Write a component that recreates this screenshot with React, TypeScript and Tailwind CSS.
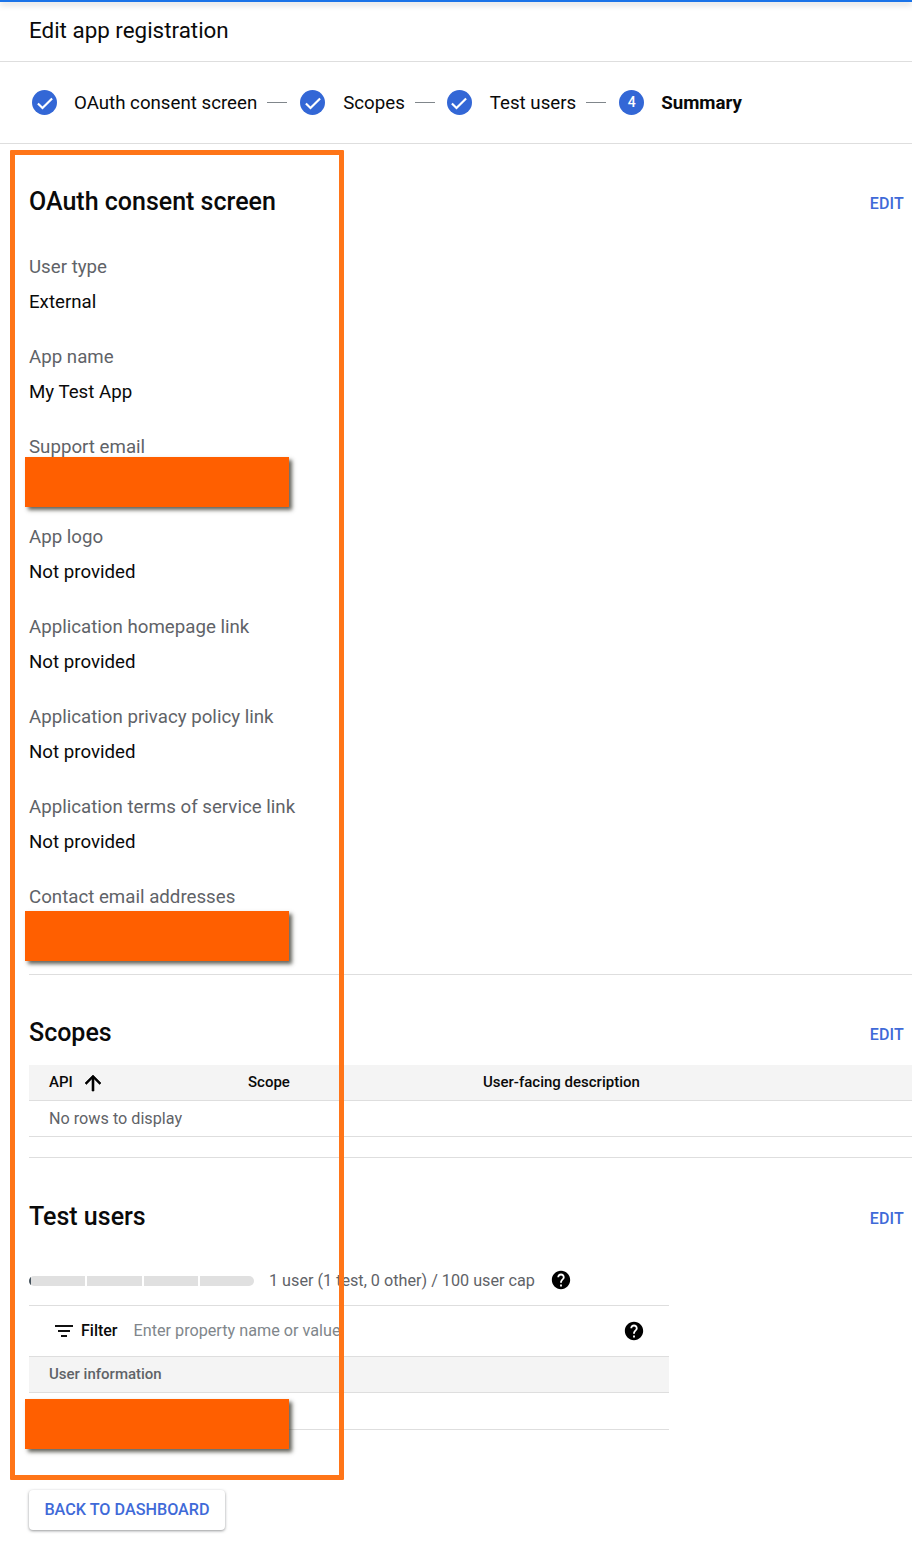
const fields = [
  { label: "User type", value: "External" },
  { label: "App name", value: "My Test App" },
  { label: "Support email", value: "" },
  { label: "App logo", value: "Not provided" },
  { label: "Application homepage link", value: "Not provided" },
  { label: "Application privacy policy link", value: "Not provided" },
  { label: "Application terms of service link", value: "Not provided" },
  { label: "Contact email addresses", value: "" },
];

function StepCircle({ n }: { n?: number }) {
  return (
    <span className="flex h-[25px] w-[25px] shrink-0 items-center justify-center rounded-full bg-[#3367d6] text-[14px] font-medium text-white">
      {n ? (
        n
      ) : (
        <svg width="20" height="20" viewBox="0 0 24 24" fill="none" stroke="white" strokeWidth="2.6">
          <path d="M3.5 12.5l5.5 5.5L20.5 6.5" />
        </svg>
      )}
    </span>
  );
}

function Dash() {
  return <span className="mx-[10px] h-px w-5 bg-[#80868b]" />;
}

function HelpIcon({ className }: { className: string }) {
  return (
    <svg width="22" height="22" viewBox="0 0 24 24" fill="#000" className={className}>
      <path d="M12 2C6.48 2 2 6.48 2 12s4.48 10 10 10 10-4.48 10-10S17.52 2 12 2zm1 17h-2v-2h2v2zm2.07-7.75l-.9.92C13.45 12.9 13 13.5 13 15h-2v-.5c0-1.1.45-2.1 1.17-2.83l1.24-1.26c.37-.36.59-.86.59-1.41 0-1.1-.9-2-2-2s-2 .9-2 2H8c0-2.21 1.79-4 4-4s4 1.79 4 4c0 .88-.36 1.68-.93 2.25z" />
    </svg>
  );
}

function Redacted({ top }: { top: string }) {
  return <div className={`absolute left-[25px] h-[50px] w-[264px] bg-[#ff5f00] shadow-[3px_3px_4px_rgba(60,60,50,0.8)] ${top}`} />;
}

function SectionHead({ title, className }: { title: string; className: string }) {
  return (
    <div className={`flex items-center justify-between pr-2 ${className}`}>
      <h2 className="pt-[2px] text-[25px] leading-[30px] font-medium text-[#0a0a0a]">{title}</h2>
      <a className="pt-[5px] text-[16px] font-medium tracking-[0.2px] text-[#3f6ad8]">EDIT</a>
    </div>
  );
}

export default function App() {
  return (
    <div className="relative h-[1548px] w-[912px] overflow-hidden bg-white font-['Roboto',sans-serif] text-[#0a0a0a]">
      <div className="h-[2px] bg-[#1a73e8] shadow-[0_2px_6px_rgba(60,64,67,0.4)]" />
      <header className="flex h-[60px] items-center border-b border-[#dedede] pb-[2px] pl-[29px] text-[22.4px]">
        Edit app registration
      </header>

      <div className="flex h-[82px] items-center border-b border-[#dedede] pl-[32px] text-[18.7px]">
        <StepCircle />
        <span className="ml-[17px] pt-[2px]">OAuth consent screen</span>
        <Dash />
        <span className="ml-[3px]"><StepCircle /></span>
        <span className="ml-[18px] pt-[2px]">Scopes</span>
        <Dash />
        <span className="ml-[2px]"><StepCircle /></span>
        <span className="ml-[18px] pt-[2px]">Test users</span>
        <Dash />
        <span className="ml-[3px]"><StepCircle n={4} /></span>
        <span className="ml-[17px] pt-[2px] font-bold">Summary</span>
      </div>

      <main className="pl-[29px]">
        <SectionHead title="OAuth consent screen" className="mt-[41px]" />

        <div className="mt-[38px]">
          {fields.map((f) => (
            <div key={f.label} className="h-[90px]">
              <div className="text-[18.7px] leading-[24px] text-[#5f6368]">{f.label}</div>
              <div className="mt-[11px] text-[18.7px] leading-[24px]">{f.value}</div>
            </div>
          ))}
        </div>

        <div className="-mt-[1px] border-t border-[#dedede]" />

        <SectionHead title="Scopes" className="mt-[41px]" />
        <div className="mt-[17px] flex h-[36px] items-center border-b border-[#dedede] bg-[#f4f4f4] text-[15px] font-medium">
          <span className="ml-5 w-[32px]">API</span>
          <svg width="24" height="24" viewBox="0 0 24 24" fill="#000" stroke="#000" strokeWidth="0.6">
            <path d="M4 12l1.41 1.41L11 7.83V20h2V7.83l5.58 5.59L20 12l-8-8-8 8z" />
          </svg>
          <span className="ml-[143px] w-[235px]">Scope</span>
          <span>User-facing description</span>
        </div>
        <div className="flex h-[36px] items-center border-b border-[#dedede] pl-5 pt-[2px] text-[16.2px] text-[#5f6368]">No rows to display</div>
        <div className="mt-[20px] border-t border-[#dedede]" />

        <SectionHead title="Test users" className="mt-[42px]" />

        <div className="mt-[36px] flex h-[26px] items-center">
          <div className="flex h-[10px] w-[225px] gap-[2px] overflow-hidden rounded-full bg-white">
            <div className="flex-1 border-l-2 border-[#45525c] bg-[#e0e0e0]" />
            <div className="flex-1 bg-[#e0e0e0]" />
            <div className="flex-1 bg-[#e0e0e0]" />
            <div className="flex-1 bg-[#e0e0e0]" />
          </div>
          <span className="ml-[15px] text-[16.2px] text-[#5f6368]">1 user (1 test, 0 other) / 100 user cap</span>
          <HelpIcon className="ml-[15px] -translate-y-px" />
        </div>

        <div className="mt-[11px] w-[640px]">
          <div className="flex h-[52px] items-center border-y border-[#dedede] pl-[25px]">
            <svg width="20" height="20" viewBox="0 0 20 20" fill="#111">
              <path d="M1 4h18v2H1zM4 9h12v2H4zM7 14h6v2H7z" />
            </svg>
            <span className="ml-[7px] text-[16px] font-medium">Filter</span>
            <span className="ml-[16px] text-[16.2px] text-[#80868b]">Enter property name or value</span>
            <HelpIcon className="ml-auto mr-[24px]" />
          </div>
          <div className="flex h-[36px] items-center border-b border-[#dedede] bg-[#f4f4f4] pl-5 text-[15px] font-medium text-[#5f6368]">
            User information
          </div>
          <div className="h-[37px] border-b border-[#dedede]" />
        </div>

        <button className="mt-[60px] h-[40px] w-[196px] rounded-[4px] bg-white text-[16.2px] font-medium text-[#3f6ad8] shadow-[0_1px_3px_rgba(60,64,67,0.55)]">
          BACK TO DASHBOARD
        </button>
      </main>

      <Redacted top="top-[457px]" />
      <Redacted top="top-[911px]" />
      <Redacted top="top-[1399px]" />
      <div className="pointer-events-none absolute left-[10px] top-[150px] h-[1330px] w-[334px] rounded-[1px] border-[5px] border-[#ff7518]" />
    </div>
  );
}
